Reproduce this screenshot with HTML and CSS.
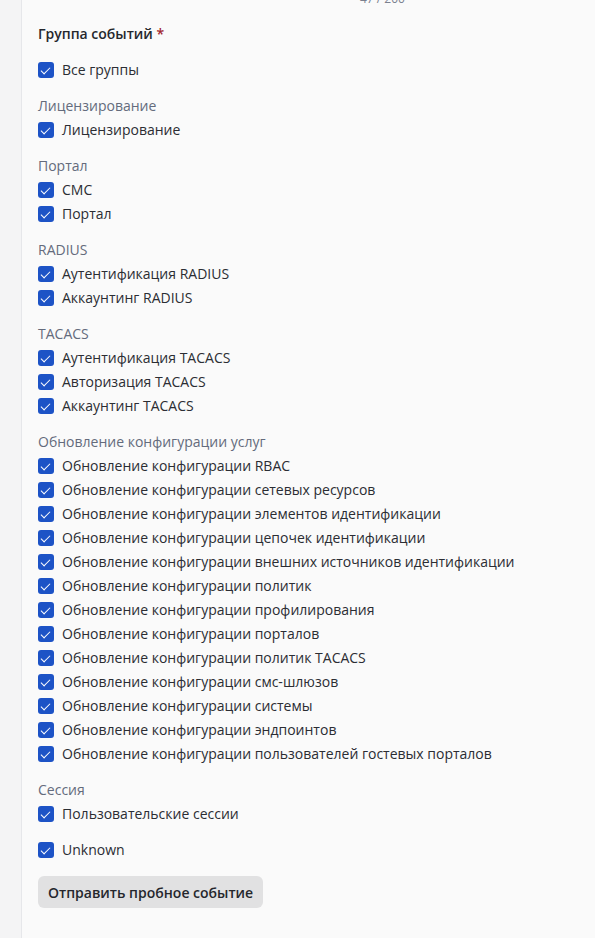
FILE: index.html
```html
<!DOCTYPE html>
<html lang="ru">
<head>
  <meta charset="UTF-8" />
  <meta name="viewport" content="width=device-width, initial-scale=1.0"/>
  <title>Группа событий</title>
  <link rel="stylesheet" href="styles.css">
</head>
<body>

<div class="rail"></div>

<div class="main">
  <div class="counter">47 / 200</div>

  <div class="field-title">Группа событий <span class="req">*</span></div>

  <div class="group">
    <label class="check"><span class="box"></span>Все группы</label>
  </div>

  <div class="group">
    <div class="group-name">Лицензирование</div>
    <label class="check"><span class="box"></span>Лицензирование</label>
  </div>

  <div class="group">
    <div class="group-name">Портал</div>
    <label class="check"><span class="box"></span>СМС</label>
    <label class="check"><span class="box"></span>Портал</label>
  </div>

  <div class="group">
    <div class="group-name">RADIUS</div>
    <label class="check"><span class="box"></span>Аутентификация RADIUS</label>
    <label class="check"><span class="box"></span>Аккаунтинг RADIUS</label>
  </div>

  <div class="group">
    <div class="group-name">TACACS</div>
    <label class="check"><span class="box"></span>Аутентификация TACACS</label>
    <label class="check"><span class="box"></span>Авторизация TACACS</label>
    <label class="check"><span class="box"></span>Аккаунтинг TACACS</label>
  </div>

  <div class="group">
    <div class="group-name">Обновление конфигурации услуг</div>
    <label class="check"><span class="box"></span>Обновление конфигурации RBAC</label>
    <label class="check"><span class="box"></span>Обновление конфигурации сетевых ресурсов</label>
    <label class="check"><span class="box"></span>Обновление конфигурации элементов идентификации</label>
    <label class="check"><span class="box"></span>Обновление конфигурации цепочек идентификации</label>
    <label class="check"><span class="box"></span>Обновление конфигурации внешних источников идентификации</label>
    <label class="check"><span class="box"></span>Обновление конфигурации политик</label>
    <label class="check"><span class="box"></span>Обновление конфигурации профилирования</label>
    <label class="check"><span class="box"></span>Обновление конфигурации порталов</label>
    <label class="check"><span class="box"></span>Обновление конфигурации политик TACACS</label>
    <label class="check"><span class="box"></span>Обновление конфигурации смс-шлюзов</label>
    <label class="check"><span class="box"></span>Обновление конфигурации системы</label>
    <label class="check"><span class="box"></span>Обновление конфигурации эндпоинтов</label>
    <label class="check"><span class="box"></span>Обновление конфигурации пользователей гостевых порталов</label>
  </div>

  <div class="group">
    <div class="group-name">Сессия</div>
    <label class="check"><span class="box"></span>Пользовательские сессии</label>
  </div>

  <div class="group">
    <label class="check"><span class="box"></span>Unknown</label>
  </div>

  <button class="test-btn">Отправить пробное событие</button>
</div>

</body>
</html>
```

FILE: styles.css
```css
body {
  margin: 0;
  font-family: "Open Sans", "Noto Sans", Arial, sans-serif;
  font-size: 14px;
  color: #2b2d33;
  background: #fafafa;
  display: flex;
  min-height: 938px;
}
.rail {
  width: 21px;
  flex: none;
  background: #f4f4f5;
  border-right: 1px solid #e6e7ea;
}
.main {
  flex: 1;
  padding: 0 0 0 16px;
}
.counter {
  margin-top: -7px;
  margin-left: 322px;
  height: 12px;
  line-height: 12px;
  font-size: 12px;
  color: #7b8190;
}
.field-title {
  margin-top: 17px;
  height: 24px;
  line-height: 24px;
  font-weight: 600;
  color: #25272d;
}
.req {
  color: #a3262f;
}
.group {
  margin-top: 12px;
}
.group-name {
  height: 24px;
  line-height: 24px;
  color: #646b7c;
}
.check {
  display: flex;
  align-items: center;
  height: 24px;
  line-height: 24px;
}
.box {
  width: 16px;
  height: 16px;
  border-radius: 3px;
  background: #1d53c6;
  margin-right: 8px;
  flex: none;
  position: relative;
}
.box::after {
  content: "";
  position: absolute;
  left: 5px;
  top: 2.5px;
  width: 4px;
  height: 8px;
  border: solid #fff;
  border-width: 0 1.6px 1.6px 0;
  transform: rotate(45deg);
}
.test-btn {
  margin-top: 14px;
  height: 32px;
  padding: 0 10px;
  border: none;
  border-radius: 6px;
  background: #e1e1e2;
  color: #25272d;
  font-family: "Open Sans", "Noto Sans", Arial, sans-serif;
  font-size: 14px;
  font-weight: 600;
  cursor: pointer;
}
```
